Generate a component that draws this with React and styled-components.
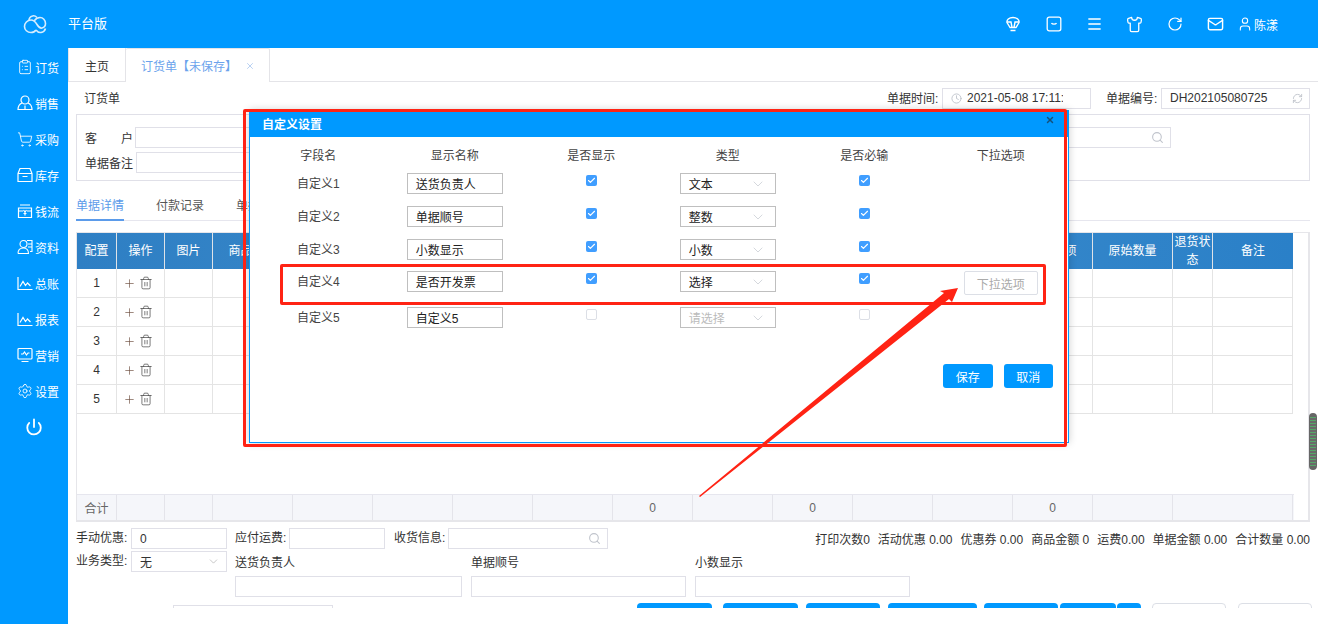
import React from "react";
import styled, { createGlobalStyle } from "styled-components";
import {
  ClipboardList,
  ShoppingCart,
  Settings,
  Power,
  Shirt,
  RotateCw,
  Mail,
  User,
  Menu,
  Plus,
  Trash2,
  Search,
  ChevronDown,
  Clock,
  RefreshCw,
  X,
  Check,
} from "lucide-react";

const BLUE = "#0099ff";

const GlobalStyle = createGlobalStyle`
  html, body {
    margin: 0;
    padding: 0;
    overflow: hidden;
    background: #fff;
  }
  body {
    font-family: "Liberation Sans", "Noto Sans CJK SC", sans-serif;
    font-size: 12px;
    color: #333;
  }
`;

//Small drawings that lucide has no match for
const Cloud = () => (
  <svg width="26" height="20" viewBox="0 0 26 20" fill="none" stroke="#d5edff" strokeWidth="1.6">
    <path d="M9 18.5c-3.6 0-6.5-2.6-6.5-6S5.400 6 9 6c3 0 4.500 2 6 4.500s3 4 5 3.500c2-.5 3.500-2 3.500-4.500 0-3.500-2.500-6-5.500-6-2.500 0-4 1-5.500 3" />
    <path d="M9 18.500c2.500 0 4-1 5-2.500M15 3.500C13.500 2 12 1.500 10.500 2 8.500 2.600 7 4.200 7 6.500" />
    <path d="M14 16c1.500 2 3 2.800 5 2.500 2.500-.4 4-2 4.500-4" />
  </svg>
);
const Bulb = () => (
  <svg width="16" height="16" viewBox="0 0 16 16" fill="none" stroke="#fff" strokeWidth="1.4">
    <path d="M5 11.500 2 6.500C1.500 4 4 1.500 8 1.500s6.500 2.500 6 5l-3 5z" />
    <path d="M2 6h4l1 5.500M14 6h-4L9 11.500M5.500 14.500h5" />
  </svg>
);
const SmileBox = () => (
  <svg width="16" height="16" viewBox="0 0 16 16" fill="none" stroke="#fff" strokeWidth="1.3">
    <rect x="1.200" y="1.200" width="13.600" height="13.600" rx="2" />
    <path d="M5.500 7c.7 1.600 4.300 1.600 5 0" />
  </svg>
);
const PersonCard = () => (
  <svg width="16" height="16" viewBox="0 0 16 16" fill="none" stroke="#fff" strokeWidth="1.100">
    <circle cx="6.500" cy="5" r="3.500" />
    <path d="M1 14.500c0-3.500 2-5.500 5.500-5.500M6.500 9c3 0 5 2 5 5.500H1M10 1.500h5v11h-2M11 5h4M11 8h4" />
  </svg>
);
const Person = () => (
  <svg width="16" height="16" viewBox="0 0 16 16" fill="none" stroke="#fff" strokeWidth="1.200">
    <circle cx="8" cy="5" r="4" />
    <path d="M5 8C2.500 9 1 11.500 1 14.500h14c0-3-1.500-5.500-4-6.500M8 10.500v4" />
  </svg>
);
const Stock = () => (
  <svg width="16" height="16" viewBox="0 0 16 16" fill="none" stroke="#fff" strokeWidth="1.200">
    <path d="M1 6.500 3 1.500h10l2 5v8H1zM1 6.500h14M5.500 9.500h5" />
  </svg>
);
const Cash = () => (
  <svg width="16" height="16" viewBox="0 0 16 16" fill="none" stroke="#fff" strokeWidth="1.200">
    <path d="M3 2h10M1.500 5h13v9.500h-13zM1.500 8h4.500M10 8h4.500" />
    <path d="M6.500 7 8 9l1.500-2M8 9v3.500M6.500 10.500h3" />
  </svg>
);
const Chart = () => (
  <svg width="16" height="15" viewBox="0 0 16 15" fill="none" stroke="#fff" strokeWidth="1.200">
    <path d="M1 1v12.500h14.500" />
    <path d="M3 10.500 6 5.500l2.500 4 2-2.500 3 3" />
  </svg>
);
const Screen = () => (
  <svg width="16" height="16" viewBox="0 0 16 16" fill="none" stroke="#fff" strokeWidth="1.200">
    <rect x="1" y="1.500" width="14" height="10.500" rx="1" />
    <path d="M4 7h2l1.500-2 2 3L11 6h1.500M4.500 14.500h7" />
  </svg>
);

const topIcons = [
  <Bulb key="bulb" />,
  <SmileBox key="smile" />,
  <Menu key="menu" size={18} strokeWidth={2} />,
  <Shirt key="shirt" size={17} strokeWidth={1.800} />,
  <RotateCw key="refresh" size={16} strokeWidth={1.800} />,
  <Mail key="mail" size={18} strokeWidth={2} />,
];

const sideItems = [
  ["订货", <ClipboardList key="a" size={16} strokeWidth={1.300} />],
  ["销售", <Person key="b" />],
  ["采购", <ShoppingCart key="c" size={17} strokeWidth={1.300} />],
  ["库存", <Stock key="d" />],
  ["钱流", <Cash key="e" />],
  ["资料", <PersonCard key="f" />],
  ["总账", <Chart key="g" />],
  ["报表", <Chart key="h" />],
  ["营销", <Screen key="i" />],
  ["设置", <Settings key="j" size={16} strokeWidth={1.300} />],
];

const columns = "40px 48px 48px repeat(11, 80px) 80px 40px 80px";
//columns under the dialog stay blank, nothing of them shows
const headers = [
  "配置", "操作", "图片", "商品编码", "", "", "", "", "", "", "", "", "", "促销选项", "原始数量", "退货状态", "备注",
];

const modalRows = [
  { field: "自定义1", name: "送货负责人", type: "文本", on: true, mt: 8 },
  { field: "自定义2", name: "单据顺号", type: "整数", on: true, mt: 12 },
  { field: "自定义3", name: "小数显示", type: "小数", on: true, mt: 12 },
  { field: "自定义4", name: "是否开发票", type: "选择", on: true, mt: 11, option: true },
  { field: "自定义5", name: "自定义5", type: "请选择", on: false, mt: 15 },
];

const totals = [
  "打印次数0", "活动优惠 0.00", "优惠券 0.00", "商品金额 0", "运费0.00", "单据金额 0.00", "合计数量 0.00",
];

const footButtons = [
  { w: 75, ml: 0 },
  { w: 75, ml: 11 },
  { w: 74, ml: 8 },
  { w: 89, ml: 8 },
  { w: 74, ml: 7 },
  { w: 56, ml: 2 },
  { w: 24, ml: 1 },
  { w: 74, ml: 11, plain: true },
  { w: 74, ml: 12, plain: true },
];

const Tick = ({ on }) => (
  <CheckBox $on={on}>{on && <Check size={9} strokeWidth={3} color="#fff" />}</CheckBox>
);

function App() {
  return (
    <Page>
      <GlobalStyle />
      <TopBar>
        <LogoBox>
          <Cloud />
        </LogoBox>
        <Brand>平台版</Brand>
        <TopIcons>
          {topIcons.map((icon, i) => (
            <TopIcon key={i}>{icon}</TopIcon>
          ))}
        </TopIcons>
        <UserBox>
          <User size={16} strokeWidth={1.600} />
          陈漾
        </UserBox>
      </TopBar>

      <Body>
        <Side>
          {sideItems.map(([label, icon]) => (
            <SideItem key={label}>
              <SideIcon>{icon}</SideIcon>
              {label}
            </SideItem>
          ))}
          <PowerRow>
            <Power size={18} strokeWidth={2.400} />
          </PowerRow>
        </Side>

        <Main>
          <TabBar>
            <HomeTab>主页</HomeTab>
            <ActiveTab>
              订货单【未保存】
              <X size={10} strokeWidth={1.500} color="#8fb6ea" />
            </ActiveTab>
          </TabBar>

          <HeadRow>
            <HeadTitle>订货单</HeadTitle>
            <HeadField $w={204}>
              <HeadLabel>单据时间:</HeadLabel>
              <Input $w={149} $pl={8}>
                <Clock size={11} color="#c0c4cc" />
                <Clip $w={96}>2021-05-08 17:11:2</Clip>
              </Input>
            </HeadField>
            <HeadField $w={204} $ml={15}>
              <HeadLabel>单据编号:</HeadLabel>
              <Input $w={149} $pl={8}>
                <Clip>DH202105080725</Clip>
                <RefreshCw size={11} color="#c0c4cc" />
              </Input>
            </HeadField>
          </HeadRow>

          <Panel>
            <PanelRow>
              <PanelLabel>客　　户</PanelLabel>
              <Input $w={640} />
              <Input $w={340} $ml={56}>
                <Spacer />
                <Search size={13} color="#c0c4cc" />
              </Input>
            </PanelRow>
            <PanelRow>
              <PanelLabel $w={51}>单据备注</PanelLabel>
              <Input $w={800} />
            </PanelRow>
          </Panel>

          <DetailTabs>
            <DetailTab $active>单据详情</DetailTab>
            <DetailTab>付款记录</DetailTab>
            <DetailTab>单据日志</DetailTab>
          </DetailTabs>

          <GridBox>
            <GridScroll>
              <GridHead>
                {headers.map((h, i) => (
                  <HeadCell key={i}>{h}</HeadCell>
                ))}
              </GridHead>
              {[1, 2, 3, 4, 5].map((n) => (
                <GridRow key={n}>
                  {headers.map((h, i) => (
                    <Cell key={i}>
                      {i === 0 && n}
                      {i === 1 && (
                        <RowTools>
                          <Plus size={13} strokeWidth={1.200} color="#6b4a3a" />
                          <Trash2 size={14} strokeWidth={1.200} color="#444" />
                        </RowTools>
                      )}
                    </Cell>
                  ))}
                </GridRow>
              ))}
            </GridScroll>
            <TotalRow>
              <TotalCell>合计</TotalCell>
              {Array.from({ length: 14 }).map((_, i) => (
                <TotalCell key={i}>{(i === 7 || i === 9 || i === 12) && "0"}</TotalCell>
              ))}
              <TotalCell $span={2} />
            </TotalRow>
          </GridBox>

          <Foot>
            <FootRow>
              <FootLabel>手动优惠:</FootLabel>
              <Input $w={96} $pl={8}>0</Input>
              <FootLabel $ml={8} $w={54}>应付运费:</FootLabel>
              <Input $w={96} />
              <FootLabel $ml={9} $w={54}>收货信息:</FootLabel>
              <Input $w={160}>
                <Spacer />
                <Search size={13} color="#c0c4cc" />
              </Input>
              <Totals>
                {totals.map((t) => (
                  <span key={t}>{t}</span>
                ))}
              </Totals>
            </FootRow>
            <FootRow $mt={2}>
              <FootLabel>业务类型:</FootLabel>
              <Input $w={96} $pl={8}>
                <Clip>无</Clip>
                <ChevronDown size={13} strokeWidth={1} color="#999" />
              </Input>
              <ExtraField $w={227} $ml={8}>
                <ExtraLabel>送货负责人</ExtraLabel>
                <Input $w={227} />
              </ExtraField>
              <ExtraField $w={215} $ml={9}>
                <ExtraLabel>单据顺号</ExtraLabel>
                <Input $w={215} />
              </ExtraField>
              <ExtraField $w={215} $ml={9}>
                <ExtraLabel>小数显示</ExtraLabel>
                <Input $w={215} />
              </ExtraField>
            </FootRow>
            <ActionRow>
              <CutInput />
              <ActionGroup>
                {footButtons.map((b, i) => (
                  <ActionButton key={i} $w={b.w} $ml={b.ml} $plain={b.plain} />
                ))}
              </ActionGroup>
            </ActionRow>
          </Foot>
        </Main>
      </Body>

      <ScrollThumb />

      <Modal>
        <ModalHead>
          自定义设置
          <CloseX>
            <X size={10} strokeWidth={3.500} color="#15507a" />
          </CloseX>
        </ModalHead>
        <ModalTitles>
          <span>字段名</span>
          <span>显示名称</span>
          <span>是否显示</span>
          <span>类型</span>
          <span>是否必输</span>
          <span>下拉选项</span>
        </ModalTitles>
        {modalRows.map((r) => (
          <ModalRow key={r.field} $mt={r.mt}>
            <FieldName>{r.field}</FieldName>
            <ModalInput>{r.name}</ModalInput>
            <Tick on={r.on} />
            <ModalInput $muted={!r.on}>
              {r.type}
              <ChevronDown size={16} strokeWidth={1} color="#c0c4cc" />
            </ModalInput>
            <Tick on={r.on} />
            {r.option ? <OptionButton>下拉选项</OptionButton> : <span />}
          </ModalRow>
        ))}
        <ModalActions>
          <ModalButton>保存</ModalButton>
          <ModalButton>取消</ModalButton>
        </ModalActions>
      </Modal>

      <RedOuter />
      <RedInner />
      <ArrowSvg width="1318" height="624" viewBox="0 0 1318 624">
        <polygon points="699,496 944,293 940,291 958,288 952,302 949,299 700,497" fill="#ff2314" />
      </ArrowSvg>
    </Page>
  );
}

const Page = styled.div`
  position: relative;
  width: 1318px;
  height: 624px;
  overflow: hidden;
  background: #fff;
`;

const TopBar = styled.div`
  height: 48px;
  display: flex;
  align-items: center;
  background: ${BLUE};
  color: #fff;
`;
const LogoBox = styled.div`
  width: 68px;
  padding-left: 22px;
  box-sizing: border-box;
  display: flex;
  align-items: center;
`;
const Brand = styled.div`
  font-size: 13px;
  margin-top: -3px;
`;
const TopIcons = styled.div`
  margin-left: auto;
  display: flex;
  align-items: center;
  gap: 23.500px;
`;
const TopIcon = styled.div`
  width: 17px;
  height: 18px;
  display: flex;
  align-items: center;
  justify-content: center;
`;
const UserBox = styled.div`
  width: 94px;
  padding-left: 13px;
  box-sizing: border-box;
  display: flex;
  align-items: center;
  gap: 1px;
  font-size: 12px;
`;

const Body = styled.div`
  display: flex;
  height: 576px;
`;
const Side = styled.div`
  width: 68px;
  flex: none;
  background: ${BLUE};
  padding-top: 1px;
  box-sizing: border-box;
  color: #fff;
`;
const SideItem = styled.div`
  height: 36px;
  display: flex;
  align-items: center;
  padding-left: 17px;
  gap: 2px;
  font-size: 12px;
`;
const SideIcon = styled.div`
  width: 16px;
  display: flex;
  justify-content: center;
`;
const PowerRow = styled.div`
  height: 36px;
  display: flex;
  align-items: center;
  justify-content: center;
`;

const Main = styled.div`
  flex: 1;
  min-width: 0;
  background: #fff;
`;
const TabBar = styled.div`
  height: 34px;
  display: flex;
  box-sizing: border-box;
  border-bottom: 1px solid #e4e4e8;
`;
const HomeTab = styled.div`
  width: 58px;
  height: 33px;
  padding-top: 1px;
  box-sizing: border-box;
  display: flex;
  align-items: center;
  justify-content: center;
  border-right: 1px solid #e4e4e8;
  border-left: 1px solid #e4e4e8;
  color: #333;
`;
const ActiveTab = styled.div`
  width: 144px;
  height: 34px;
  padding-left: 15px;
  box-sizing: border-box;
  display: flex;
  align-items: center;
  gap: 8px;
  background: #fff;
  border-right: 1px solid #e4e4e8;
  border-top: 1px solid #e4e4e8;
  border-radius: 2px 2px 0 0;
  color: #6ba3ec;
`;

const HeadRow = styled.div`
  height: 20px;
  margin-top: 6px;
  padding: 0 8px 0 16px;
  display: flex;
  align-items: center;
  color: #333;
`;
const HeadTitle = styled.div`
  margin-right: auto;
  margin-top: -2px;
`;
const HeadField = styled.div`
  width: ${(p) => p.$w}px;
  margin-left: ${(p) => p.$ml || 0}px;
  display: flex;
  align-items: center;
  justify-content: space-between;
`;
const HeadLabel = styled.span`
  margin-top: -2px;
`;
const Input = styled.div`
  width: ${(p) => p.$w}px;
  height: 21px;
  margin-left: ${(p) => p.$ml || 0}px;
  padding: 0 6px 0 ${(p) => p.$pl || 0}px;
  flex: none;
  box-sizing: border-box;
  display: flex;
  align-items: center;
  gap: 5px;
  background: #fff;
  border: 1px solid #e0e0e8;
  color: #333;
  overflow: hidden;
`;
const Clip = styled.div`
  flex: ${(p) => (p.$w ? "none" : 1)};
  width: ${(p) => (p.$w ? `${p.$w}px` : "auto")};
  min-width: 0;
  white-space: nowrap;
  overflow: hidden;
`;
const Spacer = styled.div`
  flex: 1;
`;

const Panel = styled.div`
  height: 67px;
  margin: 6px 8px 0;
  padding: 12px 8px 0;
  box-sizing: border-box;
  border: 1px solid #e0e0e8;
  display: flex;
  flex-direction: column;
  gap: 4px;
`;
const PanelRow = styled.div`
  display: flex;
  align-items: center;
`;
const PanelLabel = styled.div`
  width: ${(p) => p.$w || 50}px;
  flex: none;
  color: #333;
  white-space: nowrap;
`;

const DetailTabs = styled.div`
  height: 40px;
  margin: 0 8px;
  box-sizing: border-box;
  border-bottom: 1px solid #e6e6ee;
  display: flex;
  gap: 32px;
`;
const DetailTab = styled.div`
  height: 40px;
  padding-top: 15px;
  box-sizing: border-box;
  color: ${(p) => (p.$active ? "#5b9bea" : "#555")};
  border-bottom: ${(p) => (p.$active ? "2px solid #5b9bea" : "none")};
`;

const GridBox = styled.div`
  height: 290px;
  margin: 11px 8px 0;
  box-sizing: border-box;
  border: solid #e6e6ea;
  border-width: 1px 2px 2px 1px;
  display: flex;
  flex-direction: column;
`;
const GridScroll = styled.div`
  flex: 1;
  min-height: 0;
`;
const GridHead = styled.div`
  display: grid;
  grid-template-columns: ${columns};
  width: 1216px;
  height: 36px;
  background: linear-gradient(90deg, #2e7fc4, #408dcb 50%, #2a80c8);
`;
const HeadCell = styled.div`
  display: flex;
  align-items: center;
  justify-content: center;
  text-align: center;
  line-height: 18px;
  padding: 0 1px;
  color: #fff;
  border-right: 1px solid #dfe3e8;
  &:last-child {
    border-right: none;
  }
`;
const GridRow = styled.div`
  display: grid;
  grid-template-columns: ${columns};
  width: 1216px;
  height: 29px;
  box-sizing: border-box;
  border-bottom: 1px solid #e4e4e4;
`;
const Cell = styled.div`
  display: flex;
  align-items: center;
  justify-content: center;
  border-right: 1px solid #e4e4e4;
  color: #333;
`;
const RowTools = styled.div`
  display: flex;
  align-items: center;
  gap: 3px;
  margin-right: 6px;
`;
const TotalRow = styled.div`
  display: grid;
  grid-template-columns: ${columns};
  width: 1217px;
  height: 26px;
  flex: none;
  box-sizing: border-box;
  border-top: 1px solid #e6e6ee;
  background: #f5f6fa;
`;
const TotalCell = styled.div`
  grid-column: span ${(p) => p.$span || 1};
  display: flex;
  align-items: center;
  justify-content: center;
  border-right: 1px solid #e4e4ea;
  color: #666;
`;

const Foot = styled.div`
  height: 80px;
  margin: 6px 6px 0 8px;
  padding-right: 2px;
  overflow: hidden;
`;
const FootRow = styled.div`
  display: flex;
  align-items: flex-start;
  margin-top: ${(p) => p.$mt || 0}px;
`;
const FootLabel = styled.div`
  width: ${(p) => p.$w || 55}px;
  height: 21px;
  line-height: 21px;
  flex: none;
  margin-left: ${(p) => p.$ml || 0}px;
  color: #333;
  white-space: nowrap;
`;
const Totals = styled.div`
  margin-left: auto;
  height: 21px;
  display: flex;
  align-items: center;
  gap: 8px;
  color: #333;
  white-space: nowrap;
`;
const ExtraField = styled.div`
  width: ${(p) => p.$w}px;
  margin-left: ${(p) => p.$ml}px;
`;
const ExtraLabel = styled.div`
  height: 25px;
  line-height: 25px;
  color: #333;
`;
const ActionRow = styled.div`
  margin-top: 6px;
  display: flex;
  align-items: flex-start;
`;
const CutInput = styled.div`
  width: 160px;
  height: 21px;
  margin: 2px 0 0 97px;
  box-sizing: border-box;
  border: 1px solid #e0e0e8;
`;
const ActionGroup = styled.div`
  margin-left: auto;
  margin-right: -2px;
  display: flex;
`;
const ActionButton = styled.div`
  width: ${(p) => p.$w}px;
  height: 30px;
  margin-left: ${(p) => p.$ml}px;
  box-sizing: border-box;
  border-radius: 4px;
  background: ${(p) => (p.$plain ? "#fff" : BLUE)};
  border: ${(p) => (p.$plain ? "1px solid #dcdfe6" : "none")};
`;

const ScrollThumb = styled.div`
  position: absolute;
  left: 1309px;
  top: 413px;
  width: 8px;
  height: 57px;
  box-sizing: border-box;
  border: solid #666;
  border-width: 4px 1px;
  border-radius: 4px;
  background: repeating-linear-gradient(0deg, #55a868 0 1px, #6a6a6a 1px 3px);
`;

const Modal = styled.div`
  position: absolute;
  left: 249px;
  top: 110px;
  width: 820px;
  height: 333px;
  box-sizing: border-box;
  background: #fff;
  border: 1px solid ${BLUE};
  box-shadow: 0 0 8px rgba(0, 0, 0, 0.2);
  z-index: 2;
`;
const ModalHead = styled.div`
  position: relative;
  height: 26px;
  padding: 0 0 2px 12px;
  box-sizing: border-box;
  display: flex;
  align-items: center;
  background: ${BLUE};
  color: #fff;
  font-weight: bold;
`;
const CloseX = styled.div`
  position: absolute;
  right: 13px;
  top: 4px;
  display: flex;
`;
const modalColumns = "repeat(6, 136.500px)";
const ModalTitles = styled.div`
  display: grid;
  grid-template-columns: ${modalColumns};
  justify-items: center;
  margin-top: 11px;
  line-height: 17px;
  color: #444;
`;
const ModalRow = styled.div`
  display: grid;
  grid-template-columns: ${modalColumns};
  justify-items: center;
  align-items: start;
  margin-top: ${(p) => p.$mt}px;
  height: 21px;
  color: #444;
`;
const FieldName = styled.div`
  margin-top: 3px;
  line-height: 17px;
`;
const ModalInput = styled.div`
  width: 96px;
  height: 21px;
  padding: 0 9px 0 8px;
  box-sizing: border-box;
  display: flex;
  align-items: center;
  justify-content: space-between;
  border: 1px solid #bfbfbf;
  color: ${(p) => (p.$muted ? "#bbb" : "#222")};
`;
const CheckBox = styled.div`
  width: 11px;
  height: 11px;
  margin-top: 2px;
  box-sizing: border-box;
  display: flex;
  align-items: center;
  justify-content: center;
  border-radius: 2px;
  background: ${(p) => (p.$on ? "#409eff" : "#fff")};
  border: ${(p) => (p.$on ? "none" : "1px solid #dcdfe6")};
`;
const OptionButton = styled.div`
  width: 74px;
  height: 24px;
  box-sizing: border-box;
  display: flex;
  align-items: center;
  justify-content: center;
  border: 1px solid #dcdfe6;
  border-radius: 2px;
  color: #aaa;
`;
const ModalActions = styled.div`
  margin-top: 36px;
  padding-right: 15px;
  display: flex;
  justify-content: flex-end;
  gap: 11px;
`;
const ModalButton = styled.div`
  width: 49.500px;
  height: 24px;
  display: flex;
  align-items: center;
  justify-content: center;
  border-radius: 3px;
  background: ${BLUE};
  color: #fff;
`;

const RedOuter = styled.div`
  position: absolute;
  left: 243px;
  top: 109px;
  width: 824px;
  height: 338px;
  box-sizing: border-box;
  border: 3px solid #ff2314;
  border-radius: 2px;
  z-index: 3;
`;
const RedInner = styled.div`
  position: absolute;
  left: 280px;
  top: 264px;
  width: 766px;
  height: 41px;
  box-sizing: border-box;
  border: 3px solid #ff2314;
  border-radius: 2px;
  z-index: 3;
`;
const ArrowSvg = styled.svg`
  position: absolute;
  left: 0;
  top: 0;
  z-index: 4;
  pointer-events: none;
`;

export default App;
